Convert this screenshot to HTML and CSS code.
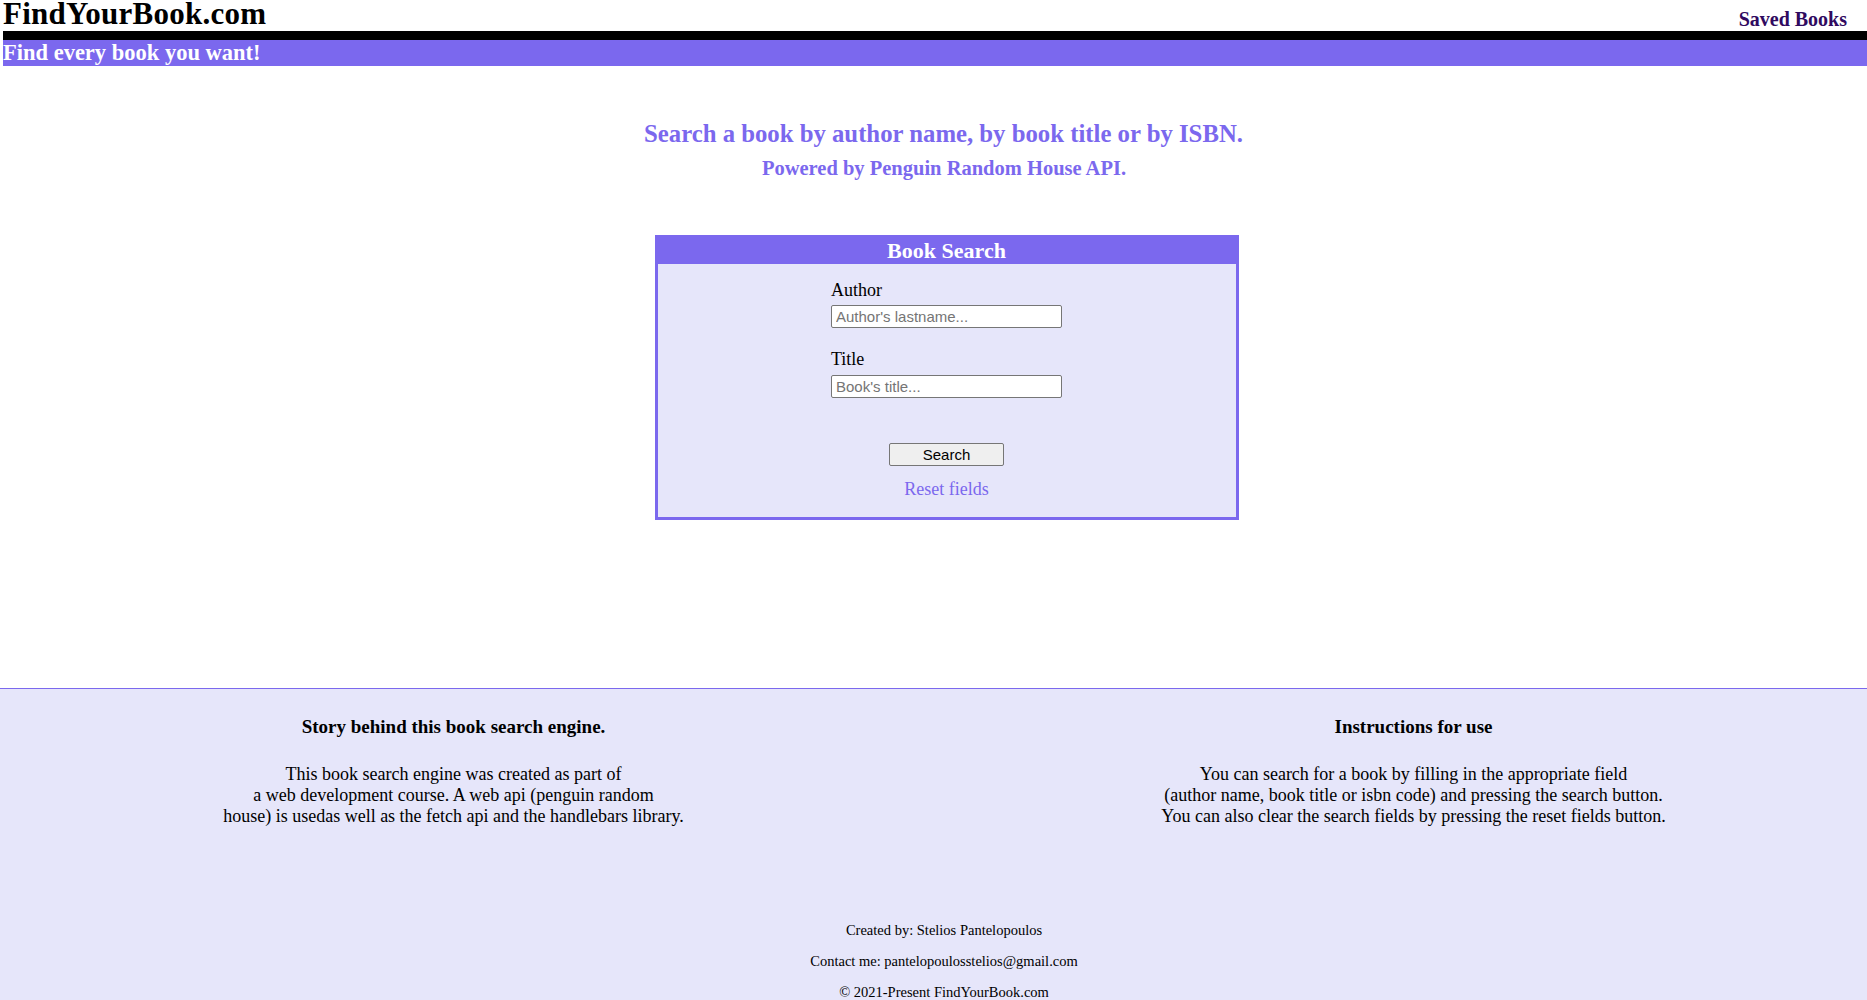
FILE: index.html
```html
<!DOCTYPE html>
<html lang="en">
<head>
<meta charset="utf-8">
<title>FindYourBook.com</title>
<link rel="stylesheet" href="styles.css">
</head>
<body>
<header class="site-header">
  <div class="header-top">
    <h1 class="logo">FindYourBook.com</h1>
    <a class="saved-link" href="#">Saved Books</a>
  </div>
  <div class="header-rule"></div>
  <h2 class="tagline">Find every book you want!</h2>
</header>

<main class="main">
  <h2 class="intro">Search a book by author name, by book title or by ISBN.</h2>
  <h3 class="powered">Powered by Penguin Random House API.</h3>

  <section class="search-box">
    <h3 class="search-title">Book Search</h3>
    <form class="search-form">
      <div class="field">
        <label for="author">Author</label>
        <input id="author" type="text" placeholder="Author's lastname...">
      </div>
      <div class="field">
        <label for="title">Title</label>
        <input id="title" type="text" placeholder="Book's title...">
      </div>
      <div class="actions">
        <button type="button" class="search-btn">Search</button>
        <a class="reset-link" href="#">Reset fields</a>
      </div>
    </form>
  </section>
</main>

<footer class="site-footer">
  <div class="footer-cols">
    <div class="footer-col">
      <h4 class="footer-heading">Story behind this book search engine.</h4>
      <p class="footer-text">This book search engine was created as part of<br>a web development course. A web api (penguin random<br>house) is usedas well as the fetch api and the handlebars library.</p>
    </div>
    <div class="footer-col">
      <h4 class="footer-heading">Instructions for use</h4>
      <p class="footer-text">You can search for a book by filling in the appropriate field<br>(author name, book title or isbn code) and pressing the search button.<br>You can also clear the search fields by pressing the reset fields button.</p>
    </div>
  </div>
  <div class="credits">
    <p>Created by: Stelios Pantelopoulos</p>
    <p>Contact me: pantelopoulosstelios@gmail.com</p>
    <p>&copy; 2021-Present FindYourBook.com</p>
  </div>
</footer>
</body>
</html>
```

FILE: styles.css
```css
html, body {
  margin: 0;
  padding: 0;
}

body {
  font-family: "Liberation Serif", "Times New Roman", serif;
  color: #000;
  background: #fff;
}

/* ---------- header ---------- */
.site-header {
  margin-left: 3px;
}

.header-top {
  display: flex;
  justify-content: space-between;
  align-items: flex-start;
  height: 31px;
}

.logo {
  margin: 0;
  font-size: 31px;
  font-weight: bold;
  line-height: 28px;
  letter-spacing: 0.25px;
}

.saved-link {
  margin-top: 9px;
  margin-right: 20px;
  font-size: 20px;
  font-weight: bold;
  line-height: 20px;
  color: #300a60;
  text-decoration: none;
}

.header-rule {
  height: 9px;
  background: #000;
}

.tagline {
  margin: 0;
  height: 26px;
  background: #7b68ee;
  color: #fff;
  font-size: 22.5px;
  font-weight: bold;
  line-height: 26px;
}

/* ---------- main ---------- */
.main {
  padding: 54px 0 0 26px;
  display: flex;
  flex-direction: column;
  align-items: center;
}

.intro {
  margin: 0;
  padding-right: 6px;
  font-size: 24.75px;
  font-weight: bold;
  color: #7b68ee;
  text-align: center;
}

.powered {
  margin: 9px 0 0;
  padding-right: 5px;
  font-size: 20.5px;
  font-weight: bold;
  color: #7b68ee;
  text-align: center;
}

.search-box {
  margin-top: 55px;
  width: 578px;
  border: 3px solid #7b68ee;
  background: #e6e6fa;
}

.search-title {
  margin: 0;
  height: 26px;
  background: #7b68ee;
  color: #fff;
  font-size: 22px;
  font-weight: bold;
  line-height: 26px;
  text-align: center;
}

.search-form {
  display: flex;
  flex-direction: column;
  align-items: center;
  padding: 15.5px 0 17.5px;
}

.field {
  width: 231px;
  display: flex;
  flex-direction: column;
}

.field + .field {
  margin-top: 21px;
}

.field label {
  font-size: 18px;
  margin-bottom: 4.5px;
}

.field input {
  box-sizing: border-box;
  width: 231px;
  height: 23px;
  margin: 0;
  padding: 0 4px;
  border: 1px solid #767676;
  border-radius: 2px;
  background: #fff;
  font-family: "Liberation Sans", Arial, sans-serif;
  font-size: 15px;
  color: #000;
}

.field input::placeholder {
  color: #757575;
}

.actions {
  margin-top: 45.5px;
  display: flex;
  flex-direction: column;
  align-items: center;
}

.search-btn {
  box-sizing: border-box;
  width: 115px;
  height: 23px;
  margin: 0;
  padding: 0;
  border: 1px solid #767676;
  border-radius: 2px;
  background: #efefef;
  font-family: "Liberation Sans", Arial, sans-serif;
  font-size: 15px;
  color: #000;
}

.reset-link {
  margin-top: 12.5px;
  font-size: 18px;
  color: #7b68ee;
  text-decoration: none;
}

/* ---------- footer ---------- */
.site-footer {
  margin-top: 168px;
  border-top: 1px solid #7b68ee;
  background: #e6e6fa;
  padding: 26.5px 0 20px;
}

.footer-cols {
  display: flex;
  justify-content: center;
  gap: 400px;
}

.footer-col {
  width: 560px;
  text-align: center;
}

.footer-heading {
  margin: 0;
  font-size: 19px;
  font-weight: bold;
}

.footer-text {
  margin: 26px 0 0;
  font-size: 18px;
}

.credits {
  margin-top: 95px;
  padding-left: 21px;
  text-align: center;
  font-size: 14.5px;
  line-height: 17px;
}

.credits p {
  margin: 0 0 14px;
}
```
